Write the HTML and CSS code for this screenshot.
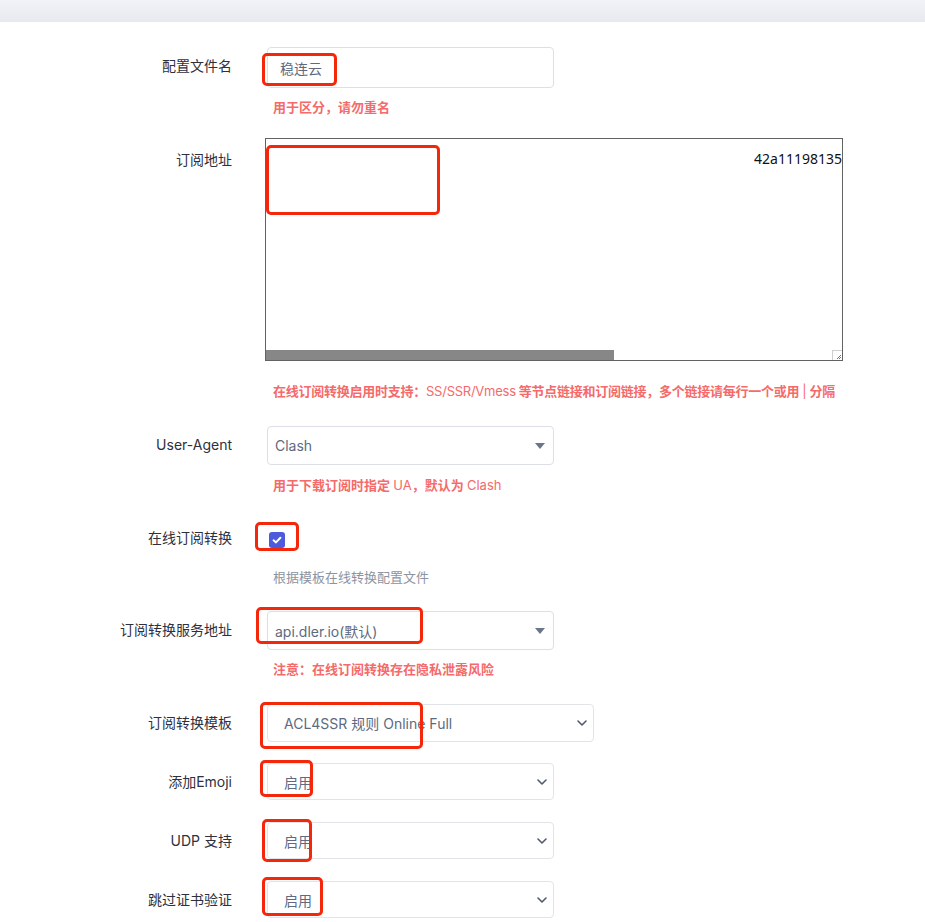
FILE: index.html
```html
<!DOCTYPE html>
<html lang="zh-CN">
<head>
  <meta charset="UTF-8">
  <meta name="viewport" content="width=device-width, initial-scale=1.0">
  <title>配置文件</title>
  <link rel="stylesheet" href="styles.css">
</head>
<body>
  <div class="topbar"></div>

  <form class="form">
    <div class="row">
      <label class="label">配置文件名</label>
      <div class="field">
        <div class="control">
          <input class="input" type="text" value="稳连云" readonly>
          <span class="mark mark-name"></span>
        </div>
        <p class="hint">用于区分，请勿重名</p>
      </div>
    </div>

    <div class="row row-url">
      <label class="label label-top">订阅地址</label>
      <div class="field">
        <div class="control control-area">
          <div class="textarea">
            <div class="ta-body">
              <span class="ta-text">42a11198135</span>
            </div>
            <div class="ta-scroll">
              <div class="ta-thumb"></div>
              <div class="ta-grip">
                <svg width="9" height="9" viewBox="0 0 9 9"><path d="M8 4 L4 8 M8 6 L6 8" stroke="#777" stroke-width="1"/></svg>
              </div>
            </div>
          </div>
          <span class="mark mark-url"></span>
        </div>
        <p class="hint hint-area">在线订阅转换启用时支持：<span class="en">SS/SSR/Vmess</span> 等节点链接和订阅链接，多个链接请每行一个或用 <span class="en">|</span> 分隔</p>
      </div>
    </div>

    <div class="row row-ua">
      <label class="label">User-Agent</label>
      <div class="field">
        <div class="control">
          <div class="select">
            <span>Clash</span>
            <span class="caret"></span>
          </div>
        </div>
        <p class="hint hint-select">用于下载订阅时指定 <span class="en">UA</span>，默认为 <span class="en">Clash</span></p>
      </div>
    </div>

    <div class="row row-check">
      <label class="label label-check">在线订阅转换</label>
      <div class="field">
        <div class="control control-check">
          <span class="checkbox">
            <svg width="16" height="16" viewBox="0 0 16 16"><path d="M4.6 8.3 L7 10.4 L11.4 5.8" fill="none" stroke="#fff" stroke-width="2" stroke-linecap="round" stroke-linejoin="round"/></svg>
          </span>
          <span class="mark mark-check"></span>
        </div>
        <p class="help">根据模板在线转换配置文件</p>
      </div>
    </div>

    <div class="row row-server">
      <label class="label">订阅转换服务地址</label>
      <div class="field">
        <div class="control">
          <div class="select">
            <span>api.dler.io(默认)</span>
            <span class="caret"></span>
          </div>
          <span class="mark mark-server"></span>
        </div>
        <p class="hint">注意：在线订阅转换存在隐私泄露风险</p>
      </div>
    </div>

    <div class="row row-tpl">
      <label class="label">订阅转换模板</label>
      <div class="field">
        <div class="control">
          <div class="native native-wide">
            <span>ACL4SSR 规则 Online Full</span>
            <svg class="chevron" width="10" height="6" viewBox="0 0 10 6"><path d="M1 1 L5 5 L9 1" fill="none" stroke="#4f5a6e" stroke-width="1.6" stroke-linecap="round" stroke-linejoin="round"/></svg>
          </div>
          <span class="mark mark-tpl"></span>
        </div>
      </div>
    </div>

    <div class="row row-opt">
      <label class="label">添加Emoji</label>
      <div class="field">
        <div class="control">
          <div class="native">
            <span>启用</span>
            <svg class="chevron" width="10" height="6" viewBox="0 0 10 6"><path d="M1 1 L5 5 L9 1" fill="none" stroke="#4f5a6e" stroke-width="1.6" stroke-linecap="round" stroke-linejoin="round"/></svg>
          </div>
          <span class="mark mark-emoji"></span>
        </div>
      </div>
    </div>

    <div class="row row-opt">
      <label class="label">UDP 支持</label>
      <div class="field">
        <div class="control">
          <div class="native">
            <span>启用</span>
            <svg class="chevron" width="10" height="6" viewBox="0 0 10 6"><path d="M1 1 L5 5 L9 1" fill="none" stroke="#4f5a6e" stroke-width="1.6" stroke-linecap="round" stroke-linejoin="round"/></svg>
          </div>
          <span class="mark mark-udp"></span>
        </div>
      </div>
    </div>

    <div class="row row-opt">
      <label class="label">跳过证书验证</label>
      <div class="field">
        <div class="control">
          <div class="native">
            <span>启用</span>
            <svg class="chevron" width="10" height="6" viewBox="0 0 10 6"><path d="M1 1 L5 5 L9 1" fill="none" stroke="#4f5a6e" stroke-width="1.6" stroke-linecap="round" stroke-linejoin="round"/></svg>
          </div>
          <span class="mark mark-cert"></span>
        </div>
      </div>
    </div>
  </form>
</body>
</html>
```

FILE: styles.css
```css
* {
  box-sizing: border-box;
}

body {
  margin: 0;
  background-color: #fff;
  font-family: Inter, "Noto Sans CJK SC", sans-serif;
  font-size: 14px;
  color: #2e303d;
}

.topbar {
  height: 22px;
  background: linear-gradient(#f2f3f7, #e8e9ee);
}

.form {
  padding-top: 25px;
  margin: 0;
}

.row {
  display: flex;
  align-items: flex-start;
}

.label {
  width: 232px;
  flex-shrink: 0;
  text-align: right;
  line-height: 38px;
  color: #2e303d;
}

.label-top {
  padding-top: 3px;
}

.label-check {
  line-height: 20px;
}

.field {
  margin-left: 35px;
}

.control {
  position: relative;
}

.input {
  display: block;
  width: 287px;
  height: 41px;
  border: 1px solid #dcdfe6;
  border-radius: 4px;
  padding: 0 12px;
  font-family: Inter, "Noto Sans CJK SC", sans-serif;
  font-size: 14px;
  color: #5d6a7f;
  outline: none;
}

.hint {
  margin: 10px 0 0;
  padding-left: 6px;
  font-size: 13px;
  line-height: 18px;
  font-weight: 600;
  color: #f56a6a;
  white-space: nowrap;
}

.hint .en {
  font-weight: 400;
}

.hint-area {
  margin-top: 21px;
  letter-spacing: -0.25px;
}

.hint-select {
  margin-top: 11px;
}

.help {
  margin: 20px 0 0;
  padding-left: 6px;
  font-size: 13px;
  line-height: 18px;
  color: #8d94a1;
}

/* textarea look-alike */
.control-area {
  margin-left: -2px;
}

.textarea {
  width: 578px;
  height: 223px;
  border: 1px solid #626262;
  display: flex;
  flex-direction: column;
}

.ta-body {
  flex: 1;
  display: flex;
  justify-content: flex-end;
  padding-top: 10px;
}

.ta-text {
  font-family: "Noto Sans", sans-serif;
  font-size: 14px;
  line-height: 20px;
  color: #111;
  white-space: nowrap;
}

.ta-scroll {
  height: 10px;
  display: flex;
  justify-content: space-between;
}

.ta-thumb {
  width: 348px;
  background-color: #878787;
}

.ta-grip {
  width: 10px;
  height: 10px;
  border-left: 1px solid #cfcfcf;
  border-top: 1px solid #cfcfcf;
  display: flex;
}

/* selects */
.select {
  width: 287px;
  height: 39px;
  border: 1px solid #dcdfe6;
  border-radius: 4px;
  padding: 0 8px 0 7px;
  display: flex;
  align-items: center;
  justify-content: space-between;
  color: #5d6a7f;
}

.caret {
  width: 0;
  height: 0;
  border-left: 5px solid transparent;
  border-right: 5px solid transparent;
  border-top: 6px solid #6b7689;
  margin-top: 1px;
}

.native {
  width: 287px;
  height: 37px;
  border: 1px solid #e2e4e8;
  border-radius: 4px;
  padding: 0 6px 0 16px;
  display: flex;
  align-items: center;
  justify-content: space-between;
  color: #5d6a7f;
}

.native-wide {
  width: 327px;
  height: 38px;
}

/* checkbox */
.control-check {
  height: 20px;
  display: flex;
  align-items: center;
}

.checkbox {
  width: 16px;
  height: 16px;
  margin-left: 2px;
  margin-top: 3px;
  border-radius: 3px;
  background-color: #4b5bdc;
  display: flex;
}

/* row spacing */
.row-url {
  margin-top: 22px;
}

.row-ua {
  margin-top: 26px;
}

.row-check {
  margin-top: 34px;
}

.row-server {
  margin-top: 25px;
}

.row-tpl {
  margin-top: 26px;
}

.row-opt {
  margin-top: 21px;
}

/* red annotation boxes drawn over the screenshot */
.mark {
  position: absolute;
  border: 3px solid #f5270b;
  border-radius: 5px;
  pointer-events: none;
}

.mark-name {
  left: -5px;
  top: 6px;
  width: 75px;
  height: 33px;
}

.mark-url {
  left: 1px;
  top: 7px;
  width: 174px;
  height: 70px;
}

.mark-check {
  left: -12px;
  top: -6px;
  width: 44px;
  height: 29px;
}

.mark-server {
  left: -11px;
  top: -4px;
  width: 167px;
  height: 37px;
}

.mark-tpl {
  left: -7px;
  top: -2px;
  width: 163px;
  height: 47px;
}

.mark-emoji {
  left: -7px;
  top: -3px;
  width: 53px;
  height: 37px;
}

.mark-udp {
  left: -5px;
  top: -3px;
  width: 50px;
  height: 43px;
}

.mark-cert {
  left: -5px;
  top: -4px;
  width: 61px;
  height: 39px;
}
```
